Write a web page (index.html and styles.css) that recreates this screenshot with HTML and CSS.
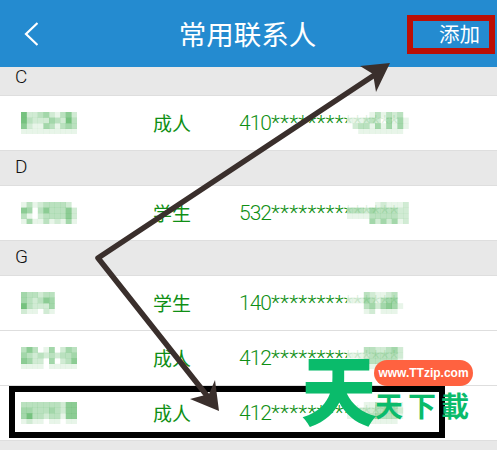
FILE: index.html
```html
<!DOCTYPE html>
<html lang="zh-CN">
<head>
    <meta charset="UTF-8">
    <meta name="viewport" content="width=device-width, initial-scale=1.0">
    <title>常用联系人</title>
    <link rel="stylesheet" href="styles.css">
</head>
<body>
<div class="screen">
    <header class="topbar">
        <a class="back" href="#">
            <svg width="16" height="24" viewBox="0 0 16 24"><path d="M15.5 1 L4 12 L15.5 23" fill="none" stroke="#fff" stroke-width="2.2"/></svg>
        </a>
        <h1 class="title">常用联系人</h1>
        <a class="add" href="#">添加</a>
    </header>
    <main class="contacts">
        <div class="letter">C</div>
        <div class="contact">
            <span class="mosaic" data-cells="6 2 2 3 4 2 1 3 5 2|6 3 2 2 2 4 3 2 6 3|5 2 1 1 4 3 1 3 4 3|1 1 1 1 1 1 1 1 1 1"></span>
            <span class="kind">成人</span>
            <span class="idcard">410<span class="stars">**************</span><span class="tail" data-cells="0 0 0 0 1 3 1 3 2 3 0|1 1 1 2 3 2 0 4 1 4 1|0 2 3 3 1 4 1 4 1 4 1|0 0 1 1 1 1 1 1 1 1 0"></span></span>
        </div>
        <div class="letter">D</div>
        <div class="contact">
            <span class="mosaic" data-cells="1 3 1 2 3 3 3 3 2 0|5 4 0 3 5 3 3 3 5 2|3 1 0 2 3 3 3 3 5 2|1 4 1 1 3 1 2 1 4 1"></span>
            <span class="kind">学生</span>
            <span class="idcard">532<span class="stars">**************</span><span class="tail" data-cells="0 0 0 0 0 1 2 1 1 1 2|3 3 3 2 4 3 3 3 3 2 2|1 1 1 1 3 3 3 3 3 2 2|0 0 0 0 4 2 4 2 4 1 2"></span></span>
        </div>
        <div class="letter">G</div>
        <div class="contact">
            <span class="mosaic" data-cells="4 3 3 2 3 3 0 0 0 0|4 3 2 3 5 4 0 0 0 0|6 3 2 2 2 4 0 0 0 0|2 1 1 0 2 1 0 0 0 0"></span>
            <span class="kind">学生</span>
            <span class="idcard">140<span class="stars">**************</span><span class="tail" data-cells="0 0 0 3 2 1 1 2 3 0 0|1 1 1 4 3 1 3 4 4 0 0|0 0 0 3 4 2 4 5 4 1 0|0 0 0 1 2 0 1 1 1 0 0"></span></span>
        </div>
        <div class="contact">
            <span class="mosaic" data-cells="3 5 3 0 1 4 0 2 4 3|4 3 2 3 2 3 2 3 3 4|5 4 2 2 0 4 0 2 3 5|1 1 1 1 0 1 1 1 1 1"></span>
            <span class="kind">成人</span>
            <span class="idcard">412<span class="stars">**************</span><span class="tail" data-cells="0 0 0 3 3 2 2 3 4 2 0|1 1 1 2 3 3 3 3 3 2 0|0 0 1 3 3 3 3 3 3 1 0|0 0 0 1 1 1 1 1 1 0 0"></span></span>
        </div>
        <div class="contact">
            <span class="mosaic" data-cells="3 3 3 3 3 3 3 2 5 5|4 4 3 3 3 4 3 2 5 5|4 6 3 3 2 3 3 1 5 5|1 2 1 1 0 1 1 0 1 1"></span>
            <span class="kind">成人</span>
            <span class="idcard">412<span class="stars">**************</span><span class="tail" data-cells="0 0 0 1 1 3 3 3 3 1 0|1 1 2 2 2 3 3 3 3 2 0|1 1 1 2 3 4 3 3 3 1 0|0 0 0 1 1 1 1 1 1 0 0"></span></span>
        </div>
    </main>

    <!-- annotations drawn on top of the screenshot -->
    <div class="mark mark-add"></div>
    <div class="mark mark-row"></div>
    <svg class="arrows" width="497" height="450" viewBox="0 0 497 450">
        <path d="M382 70 L98 258 L212 402" fill="none" stroke="#3a2f2c" stroke-width="5.5" stroke-linejoin="round"/>
        <polygon points="390,63 360,66 373,74 376,92" fill="#3a2f2c"/>
        <polygon points="219,411 215,380 209,394 190,399" fill="#3a2f2c"/>
    </svg>

    <div class="watermark">
        <span class="wm-big">天</span>
        <span class="wm-url">www.TTzip.com</span>
        <span class="wm-name">天下載</span>
    </div>
</div>
<script src="mosaic.js"></script>
</body>
</html>
```

FILE: styles.css
```css
body {
    margin: 0;
    font-family: Roboto, "Noto Sans CJK SC", sans-serif;
}

.screen {
    position: relative;
    width: 497px;
    height: 450px;
    overflow: hidden;
    background: #e8e8e8;
}

.topbar {
    position: relative;
    z-index: 1;
    height: 67px;
    background: #248bd0;
    color: white;
    display: flex;
    align-items: center;
    justify-content: center;
}

.back {
    position: absolute;
    left: 22px;
    top: 22px;
    line-height: 0;
}

.title {
    margin: 0 2px 2px 0;
    font-size: 27.5px;
    font-weight: normal;
}

.add {
    position: absolute;
    right: 17px;
    top: 20px;
    color: white;
    text-decoration: none;
    font-size: 20.5px;
    line-height: 30px;
}

.contacts {
    margin-top: -6px;
}

.letter {
    height: 34px;
    line-height: 32px;
    padding-left: 15px;
    font-size: 19px;
    font-weight: 300;
    color: #111;
    border-bottom: 1px solid #dedede;
}

.contact {
    height: 54px;
    background: white;
    display: grid;
    grid-template-columns: 132px 86px 1fr;
    align-items: center;
    padding-left: 21px;
    border-bottom: 1px solid #dedede;
    color: #0f8f14;
    font-size: 19px;
}

.mosaic {
    line-height: 0;
}

.kind {
    padding-bottom: 2px;
}

.idcard {
    position: relative;
    font-size: 21px;
    font-weight: 300;
    letter-spacing: -1px;
    white-space: nowrap;
}

.stars {
    letter-spacing: 0.2px;
}

/* blurred last digits sit over the stars */
.tail {
    position: absolute;
    left: 108px;
    top: 1px;
    line-height: 0;
}

.mark {
    position: absolute;
    z-index: 2;
    border: 6px solid #000;
    box-sizing: border-box;
}

.mark-add {
    left: 407px;
    top: 15px;
    width: 88px;
    height: 39px;
    border-color: #bb0f05;
}

.mark-row {
    left: 9px;
    top: 386px;
    width: 436px;
    height: 52px;
}

.arrows {
    position: absolute;
    z-index: 2;
    left: 0;
    top: 0;
}

.watermark {
    position: absolute;
    z-index: 3;
    left: 0;
    top: 0;
    color: #0abb6b;
    font-weight: 900;
}

.wm-big {
    position: absolute;
    left: 301px;
    top: 344px;
    font-size: 76px;
    line-height: 100px;
}

.wm-url {
    position: absolute;
    left: 374px;
    top: 360px;
    width: 99px;
    height: 26px;
    border-radius: 13px;
    background: #ff6240;
    color: white;
    font-family: "Liberation Sans", sans-serif;
    font-size: 12px;
    font-weight: bold;
    line-height: 26px;
    text-align: center;
}

.wm-name {
    position: absolute;
    left: 375px;
    top: 388px;
    font-size: 28px;
    font-weight: 700;
    letter-spacing: 5px;
    line-height: 40px;
    white-space: nowrap;
}
```

FILE: mosaic.js
```js
// builds the pixelated blocks that hide names and id numbers
document.querySelectorAll('[data-cells]').forEach(el => {
  const rows = el.dataset.cells.split('|').map(r => r.replace(/ /g, '').split(''));
  const size = 5.6;
  const cols = rows[0].length;
  const w = cols * size;
  const h = rows.length * size;
  let rects = '';
  rows.forEach((row, y) => {
    row.forEach((c, x) => {
      rects += `<rect x="${x * size}" y="${y * size}" width="${size + 0.2}" height="${size + 0.2}" fill="#1a9a2a" fill-opacity="${c * 0.1}"/>`;
    });
  });
  const white = el.classList.contains('tail') ? `<rect x="0" width="${w}" height="${h}" fill="#fff" fill-opacity="0.85"/>` : '';
  el.innerHTML = `<svg width="${w}" height="${h}" viewBox="0 0 ${w} ${h}">${white}${rects}</svg>`;
});
```
